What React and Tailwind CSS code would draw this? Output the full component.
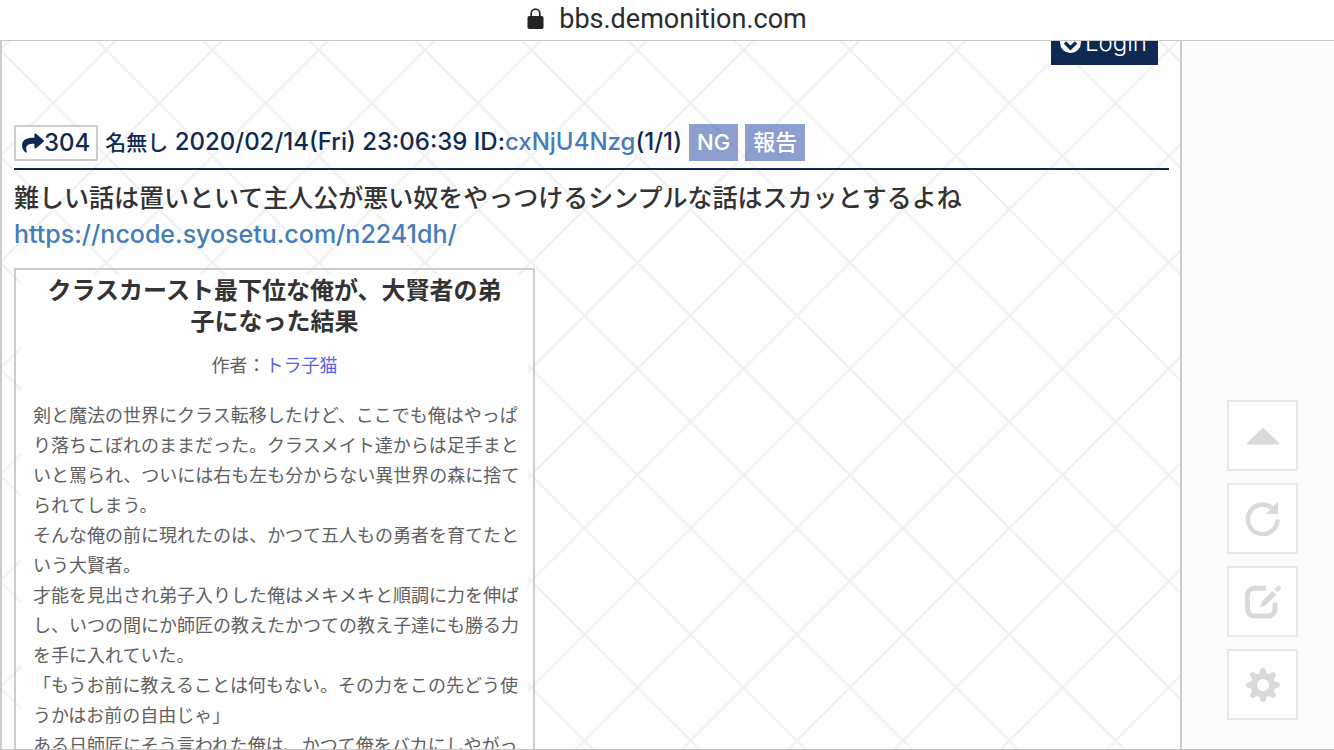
import React from 'react';
import { FaShare } from 'react-icons/fa';

const JP = "font-['Inter','Noto_Sans_CJK_JP',sans-serif]";

const story = [
    '剣と魔法の世界にクラス転移したけど、ここでも俺はやっぱ',
    'り落ちこぼれのままだった。クラスメイト達からは足手まと',
    'いと罵られ、ついには右も左も分からない異世界の森に捨て',
    'られてしまう。',
    'そんな俺の前に現れたのは、かつて五人もの勇者を育てたと',
    'いう大賢者。',
    '才能を見出され弟子入りした俺はメキメキと順調に力を伸ば',
    'し、いつの間にか師匠の教えたかつての教え子達にも勝る力',
    'を手に入れていた。',
    '「もうお前に教えることは何もない。その力をこの先どう使',
    'うかはお前の自由じゃ」',
    'ある日師匠にそう言われた俺は、かつて俺をバカにしやがっ',
];

const LockIcon = () => (
    <svg width="17" height="22" viewBox="0 0 17 22" aria-hidden="true">
        <path d="M4.2 9V5.4a4.3 4.3 0 0 1 8.6 0V9" fill="none" stroke="#222327" strokeWidth="1.7" />
        <rect x="0.5" y="8" width="16" height="13" rx="1.8" fill="#222327" />
    </svg>
);

const UpIcon = () => (
    <svg width="34" height="18" viewBox="0 0 34 18" fill="currentColor" aria-hidden="true">
        <path d="M17 0.5 L33 16 Q34 17.5 32 17.5 H2 Q0 17.5 1 16 Z" />
    </svg>
);

const ReloadIcon = () => (
    <svg width="36" height="36" viewBox="0 0 36 36" aria-hidden="true">
        <path d="M32.5 18.5A14.8 14.8 0 1 1 27 6.8" fill="none" stroke="currentColor" strokeWidth="4.4" />
        <path d="M33 0.5V13H21Z" fill="currentColor" />
    </svg>
);

const EditIcon = () => (
    <svg width="38" height="36" viewBox="0 0 38 36" aria-hidden="true">
        <path d="M22 4.2H10.5A7 7 0 0 0 3.5 11.2V25a7 7 0 0 0 7 7H24a7 7 0 0 0 7-7V18.5" fill="none" stroke="currentColor" strokeWidth="5" />
        <path d="M16 23.5l2.2-6.5L28.5 7l3.8 3.8L22 21Z" fill="currentColor" />
        <path d="M30.3 5.2l3-3q1.5-1.4 3 0t0 3.2l-2.8 3Z" fill="currentColor" />
    </svg>
);

const GearIcon = () => (
    <svg width="34" height="34" viewBox="0 0 34 34" fill="currentColor" aria-hidden="true">
        {[0, 45, 90, 135, 180, 225, 270, 315].map((angle) => (
            <path key={angle} d="M13 7L14.6 1.2Q15 0 17 0T19.4 1.2L21 7Z" transform={`rotate(${angle} 17 17)`} />
        ))}
        <path fillRule="evenodd" d="M17 4.8a12.2 12.2 0 1 0 0 24.4a12.2 12.2 0 1 0 0-24.4ZM17 10.9a6.1 6.1 0 1 1 0 12.2a6.1 6.1 0 1 1 0-12.2Z" />
    </svg>
);

const CheckCircle = () => (
    <svg width="21" height="21" viewBox="0 0 21 21" aria-hidden="true">
        <circle cx="10.5" cy="10.5" r="10.5" fill="#fff" />
        <path d="M5 10.5l5.5 5.5 5.5-5.5" fill="none" stroke="#0f2a52" strokeWidth="3.4" />
    </svg>
);

const Lattice = () => (
    <svg className="absolute inset-0 w-full h-full" aria-hidden="true">
        <defs>
            <pattern id="lattice" width="106.25" height="106.25" x="-2" y="9" patternUnits="userSpaceOnUse">
                <path d="M-2 -2L108.25 108.25M108.25 -2L-2 108.25" fill="none" stroke="#f1f1f1" strokeWidth="2.4" />
            </pattern>
        </defs>
        <rect width="100%" height="100%" fill="url(#lattice)" />
    </svg>
);

const tools = [
    { label: 'ページ上部へ', icon: UpIcon },
    { label: '更新', icon: ReloadIcon },
    { label: '書き込み', icon: EditIcon },
    { label: '設定', icon: GearIcon },
];

const ToolButton = ({ label, icon: Icon }) => (
    <button aria-label={label} className="w-[71px] h-[71px] border-2 border-[#e8e8e8] bg-[#fefefe] text-[#dadada] flex items-center justify-center">
        <Icon />
    </button>
);

const TagButton = ({ children }) => (
    <button className="h-[37px] px-2 bg-[#3f5faf]/60 text-white text-[22px] font-medium leading-[37px]">
        {children}
    </button>
);

const App = () => (
    <div className={`h-screen flex flex-col overflow-hidden bg-[#fcfcfc] ${JP}`}>
        <header className="h-[41px] shrink-0 bg-white border-b border-[#c8c8c8] flex items-center justify-center gap-[15px] pb-[3px]">
            <LockIcon />
            <span className="font-['Roboto',sans-serif] text-[27px] leading-[36px] text-[#2b2c30]">bbs.demonition.com</span>
        </header>

        <div className="flex-1 min-h-0 flex border-b border-[#c4c4c4]">
            <main className="relative flex-1 min-w-0 overflow-hidden bg-[#fefefe] border-x-2 border-[#cccccc] pl-3 pr-[11px]">
                <Lattice />
                <div className="relative flex justify-end pr-[11px] -mt-[21px]">
                    <button className="w-[107px] h-[45px] bg-[#0f2a52] text-white text-[24px] font-light flex items-center gap-1 pl-[9px]">
                        <CheckCircle />
                        Login
                    </button>
                </div>

                <article className="relative mt-[59px]">
                    <div className="flex items-center gap-[7px] pb-[7px] border-b-2 border-[#0f2a52] text-[#0f2a52] font-medium whitespace-nowrap">
                        <button className="h-[36px] px-[6px] border-2 border-[#cccccc] bg-white text-[24px] flex items-center">
                            <FaShare size={22} />
                            304
                        </button>
                        <div className="text-[24px] leading-[36px]">
                            <span className="text-[21px]">名無し</span> 2020/02/14(Fri) 23:06:39 ID:<a href="#id" className="text-[#467cb8]">cxNjU4Nzg</a>(1/1)
                        </div>
                        <TagButton>NG</TagButton>
                        <TagButton>報告</TagButton>
                    </div>

                    <p className="mt-[10px] text-[25px] leading-[36px] font-medium text-[#333333]">
                        難しい話は置いといて主人公が悪い奴をやっつけるシンプルな話はスカッとするよね
                        <br />
                        <a href="#ncode" className="text-[#467cb8]">https://ncode.syosetu.com/n2241dh/</a>
                    </p>

                    <section className="mt-[16px] w-[521px] border-2 border-[#cccccc] p-[5px]">
                        <div className="bg-[#fefefe] text-[#606060]">
                            <h1 className="text-center text-[24px] leading-[31px] font-bold text-[#333333]">
                                クラスカースト最下位な俺が、大賢者の弟
                                <br />
                                子になった結果
                            </h1>
                            <p className="mt-[14px] text-center text-[18px] leading-[30px]">
                                作者：<a href="#author" className="text-[#5565e0]">トラ子猫</a>
                            </p>
                            <div className="mt-[20px] px-3 text-[18px] leading-[30px] whitespace-nowrap">
                                {story.map((line) => (
                                    <p key={line}>{line}</p>
                                ))}
                            </div>
                        </div>
                    </section>
                </article>
            </main>

            <aside className="w-[152px] shrink-0 flex flex-col justify-end items-end gap-3 pr-[36px] pb-[29px]">
                {tools.map((tool) => (
                    <ToolButton key={tool.label} label={tool.label} icon={tool.icon} />
                ))}
            </aside>
        </div>
    </div>
);

export default App;
